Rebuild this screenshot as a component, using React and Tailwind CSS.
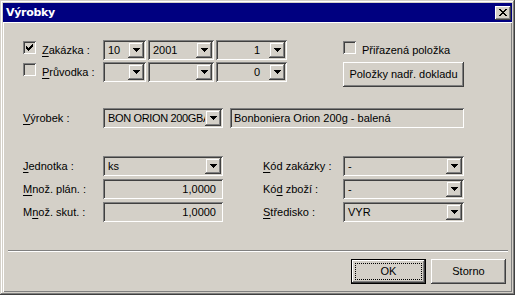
import React from 'react';

// Win classic bevels
const sunken = 'shadow-[inset_1px_1px_#808080,inset_-1px_-1px_#fff,inset_2px_2px_#404040,inset_-2px_-2px_#d4d0c8]';
const raised = 'shadow-[inset_-1px_-1px_#404040,inset_1px_1px_#fff,inset_-2px_-2px_#808080]';
const comboBtn = 'shadow-[inset_-1px_-1px_#404040,inset_1px_1px_#d4d0c8,inset_-2px_-2px_#808080,inset_2px_2px_#fff]';

function Arrow() {
  return (
    <svg width="7" height="4" viewBox="0 0 7 4" shapeRendering="crispEdges">
      <path d="M0 0h7v1H0z M1 1h5v1H1z M2 2h3v1H2z M3 3h1v1H3z" fill="#000" />
    </svg>
  );
}

function Combo({ className, value, right, tight }) {
  return (
    <div className={`flex h-[20px] p-[2px] ${sunken} ${className}`}>
      <div className={`flex min-w-0 flex-1 items-center overflow-hidden whitespace-nowrap ${right ? 'justify-end pr-[9px]' : 'pl-[3px]'} ${tight ? 'tracking-[-0.35px]' : ''}`}>
        {value}
      </div>
      <div className={`flex h-[16px] w-[16px] shrink-0 items-center justify-center pl-[1px] ${comboBtn}`}>
        <Arrow />
      </div>
    </div>
  );
}

function Field({ className, value, right }) {
  return (
    <div className={`flex h-[20px] items-center overflow-hidden whitespace-nowrap p-[2px] ${sunken} ${right ? 'justify-end pr-[7px]' : 'pl-[4px]'} ${className}`}>
      {value}
    </div>
  );
}

function Check({ checked }) {
  return (
    <div className={`flex h-[13px] w-[13px] shrink-0 items-start p-[3px] ${sunken}`}>
      {checked && (
        <svg width="7" height="7" viewBox="0 0 7 7" shapeRendering="crispEdges">
          <path
            d="M6 0h1v1H6z M5 1h2v1H5z M0 2h1v1H0z M4 2h3v1H4z M0 3h2v1H0z M3 3h3v1H3z M0 4h5v1H0z M1 5h3v1H1z M2 6h1v1H2z"
            fill="#000"
          />
        </svg>
      )}
    </div>
  );
}

function Label({ k, pre = '', rest, className = 'w-[80px]' }) {
  return (
    <div className={`flex h-[20px] shrink-0 items-center ${className}`}>
      <span className="whitespace-pre">
        {pre}
        <span className="underline underline-offset-[2px]">{k}</span>
        {rest}
      </span>
    </div>
  );
}

export default function App() {
  return (
    <div className="flex h-[295px] w-[515px] flex-col bg-[#d4d0c8] p-[3px] font-['Liberation_Sans',Arial,sans-serif] text-[11px] leading-none text-black shadow-[inset_-1px_-1px_#404040,inset_1px_1px_#d4d0c8,inset_-2px_-2px_#808080,inset_2px_2px_#fff]">
      {/* title bar */}
      <div className="flex h-[19px] shrink-0 items-center justify-between bg-[#000080] pl-[3px] pr-[1px]">
        <span className="font-['DejaVu_Sans',sans-serif] text-[11px] font-bold tracking-[-0.3px] text-white">Výrobky</span>
        <div className={`flex h-[14px] w-[16px] items-center justify-center bg-[#d4d0c8] pb-[1px] ${raised}`}>
          <svg width="8" height="7" viewBox="0 0 8 7" shapeRendering="crispEdges">
            <path
              d="M0 0h2v1H0z M6 0h2v1H6z M1 1h2v1H1z M5 1h2v1H5z M2 2h4v1H2z M3 3h2v1H3z M2 4h4v1H2z M1 5h2v1H1z M5 5h2v1H5z M0 6h2v1H0z M6 6h2v1H6z"
              fill="#000"
            />
          </svg>
        </div>
      </div>

      {/* client */}
      <div className="flex flex-1 flex-col shadow-[inset_1px_1px_#fff,inset_-1px_-1px_#808080]">
        <div className="pl-[20px] pt-[18px]">
          {/* top section */}
          <div className="flex h-[47px] items-start">
            <div className="flex flex-col gap-[2px]">
              <div className="flex h-[20px]">
                <div className="flex w-[80px] items-start">
                  <div className="mt-[1px]"><Check checked /></div>
                  <Label k="Z" rest="akázka :" className="ml-[6px]" />
                </div>
                <Combo className="w-[43px]" value="10" />
                <Combo className="ml-[2px] w-[66px]" value="2001" />
                <Combo className="ml-[2px] w-[71px]" value="1" right />
              </div>
              <div className="flex h-[20px]">
                <div className="flex w-[80px] items-start">
                  <div className="mt-[1px]"><Check /></div>
                  <Label k="P" rest="růvodka :" className="ml-[6px]" />
                </div>
                <Combo className="w-[43px]" value="" />
                <Combo className="ml-[2px] w-[66px]" value="" />
                <Combo className="ml-[2px] w-[71px]" value="0" right />
              </div>
            </div>
            <div className="ml-[56px] flex flex-col gap-[2px]">
              <div className="flex h-[20px] items-start">
                <div className="mt-[1px]"><Check /></div>
                <div className="ml-[6px] flex h-[20px] items-center">Přiřazená položka</div>
              </div>
              <div className={`flex h-[25px] w-[121px] items-center justify-center ${raised}`}>Položky nadř. dokladu</div>
            </div>
          </div>

          {/* product */}
          <div className="mt-[21px] flex">
            <Label k="V" rest="ýrobek :" />
            <Combo className="w-[120px]" value="BON ORION 200GBA" tight />
            <Field className="ml-[7px] w-[234px]" value="Bonboniera Orion 200g - balená" />
          </div>

          {/* quantities */}
          <div className="mt-[28px] flex">
            <div className="flex flex-col gap-[3px]">
              <div className="flex">
                <Label k="J" rest="ednotka :" />
                <Combo className="w-[120px]" value="ks" />
              </div>
              <div className="flex">
                <Label k="M" rest="nož. plán. :" />
                <Field className="w-[120px]" value="1,0000" right />
              </div>
              <div className="flex">
                <Label pre="M" k="n" rest="ož. skut. :" />
                <Field className="w-[120px]" value="1,0000" right />
              </div>
            </div>
            <div className="ml-[40px] flex flex-col gap-[3px]">
              <div className="flex">
                <Label k="K" rest="ód zakázky :" />
                <Combo className="w-[121px]" value="-" />
              </div>
              <div className="flex">
                <Label pre="Kó" k="d" rest=" zboží :" />
                <Combo className="w-[121px]" value="-" />
              </div>
              <div className="flex">
                <Label k="S" rest="tředisko :" />
                <Combo className="w-[121px]" value="VYR" />
              </div>
            </div>
          </div>
        </div>

        {/* separator */}
        <div className="ml-[5px] mt-[28px] h-[2px] w-[500px] border-b border-t border-b-white border-t-[#808080]" />

        {/* buttons */}
        <div className="mt-[7px] flex justify-end gap-[5px] pr-[6px]">
          <div className={`flex h-[25px] w-[75px] border border-black p-[3px] ${raised}`}>
            <div className="flex flex-1 items-center justify-center border border-dotted border-black">OK</div>
          </div>
          <div className={`flex h-[25px] w-[75px] items-center justify-center ${raised}`}>Storno</div>
        </div>
      </div>
    </div>
  );
}
